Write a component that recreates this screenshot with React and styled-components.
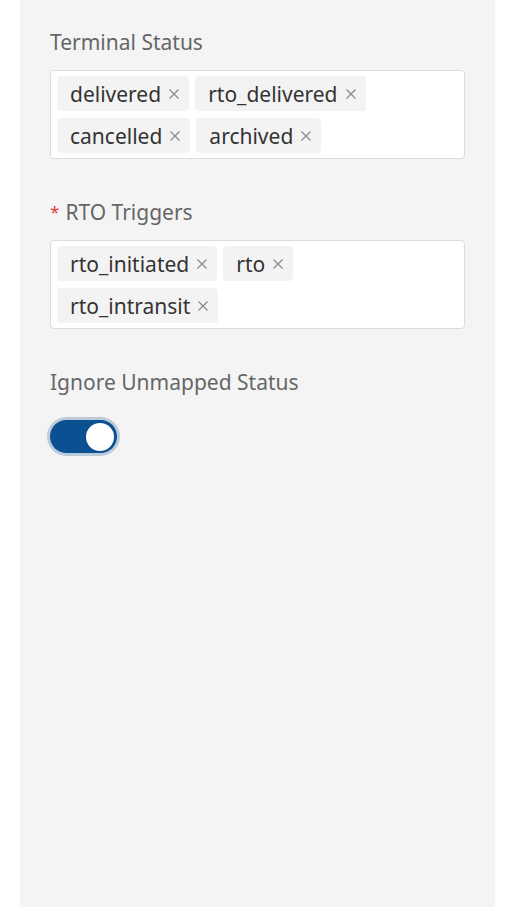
import styled, { createGlobalStyle } from 'styled-components';

const GlobalStyle = createGlobalStyle`
  html, body {
    margin: 0;
    padding: 0;
    background: #fff;
    font-family: "Noto Sans", "Open Sans", sans-serif;
  }
`;

const fields = [
  { label: 'Terminal Status', tags: ['delivered', 'rto_delivered', 'cancelled', 'archived'] },
  { label: 'RTO Triggers', required: true, tags: ['rto_initiated', 'rto', 'rto_intransit'] },
];

function Tag({ children }) {
  return (
    <S.Tag>
      {children}
      <S.Close>
        <svg width='12' height='12' viewBox='0 0 12 12'>
          <path d='M1.5 1.5 L10.5 10.5 M10.5 1.5 L1.5 10.5' stroke='currentColor' strokeWidth='1.2' />
        </svg>
      </S.Close>
    </S.Tag>
  );
}

function App() {
  return (
    <>
      <GlobalStyle />
      <S.Page>
        <S.Panel>
          {fields.map((f) => (
            <S.Field key={f.label}>
              <S.Label>
                {f.required && <S.Star>*</S.Star>}
                {f.label}
              </S.Label>
              <S.TagBox>
                {f.tags.map((t) => (
                  <Tag key={t}>{t}</Tag>
                ))}
              </S.TagBox>
            </S.Field>
          ))}
          <S.Field>
            <S.Label>Ignore Unmapped Status</S.Label>
            <S.Switch $on>
              <S.Knob />
            </S.Switch>
          </S.Field>
        </S.Panel>
      </S.Page>
    </>
  );
}

// -------------------------------------------------- styling ----------------------------------------------
const S = {};
S.Page = styled.div`
  height: 908px;
  padding: 0 15px 0 20px;
  box-sizing: border-box;
`;

S.Panel = styled.div`
  height: 907px;
  background: #f4f4f4;
  padding: 28px 30px;
  box-sizing: border-box;
  display: flex;
  flex-direction: column;
  gap: 39px;
`;

S.Field = styled.div`
  display: flex;
  flex-direction: column;
  align-items: flex-start;
  gap: 14px;
`;

S.Label = styled.div`
  font-size: 21px;
  line-height: 28px;
  color: #666;
`;

S.Star = styled.span`
  color: #e0393e;
  font-size: 17px;
  margin-right: 6px;
  vertical-align: 2px;
`;

S.TagBox = styled.div`
  align-self: stretch;
  background: #fff;
  border: 1px solid #dcdcdc;
  border-radius: 4px;
  padding: 5px 10px 5px 6px;
  display: flex;
  flex-wrap: wrap;
  gap: 7px 6px;
`;

S.Tag = styled.div`
  display: flex;
  align-items: center;
  height: 35px;
  padding: 0 9px 0 13px;
  background: #f3f3f3;
  border-radius: 4px;
  font-size: 21px;
  color: #333;
`;

S.Close = styled.span`
  display: flex;
  margin-left: 7px;
  color: #888;
`;

S.Switch = styled.div`
  width: 67px;
  height: 33px;
  border-radius: 17px;
  background: ${(p) => (p.$on ? '#0b5091' : '#bbb')};
  box-shadow: 0 0 0 3px #bccbda;
  display: flex;
  align-items: center;
  justify-content: ${(p) => (p.$on ? 'flex-end' : 'flex-start')};
  padding: 0 3px;
  box-sizing: border-box;
  margin-top: 10px;
`;

S.Knob = styled.div`
  width: 28px;
  height: 28px;
  border-radius: 50%;
  background: #fff;
`;

export default App;
